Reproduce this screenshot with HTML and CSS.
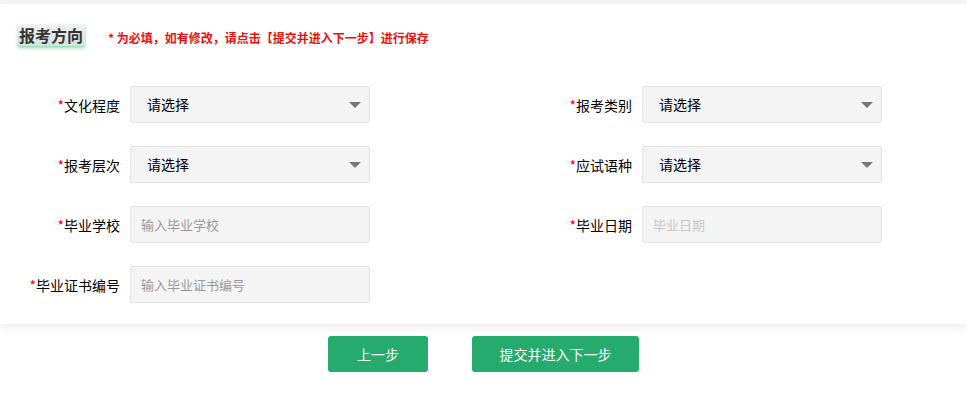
FILE: index.html
```html
<!DOCTYPE html>
<html lang="zh-CN">
<head>
    <meta charset="UTF-8">
    <title>报考方向</title>
    <link rel="stylesheet" href="styles.css">
</head>
<body>

<div class="top-strip"></div>
<div class="card">
    <div class="card-head">
        <h2 class="title">报考方向</h2>
        <span class="tip">* 为必填，如有修改，请点击【提交并进入下一步】进行保存</span>
    </div>
    <form class="form-grid">
        <div class="field">
            <label><i>*</i>文化程度</label>
            <div class="select">请选择<span class="arrow"></span></div>
        </div>
        <div class="field">
            <label><i>*</i>报考类别</label>
            <div class="select">请选择<span class="arrow"></span></div>
        </div>
        <div class="field">
            <label><i>*</i>报考层次</label>
            <div class="select">请选择<span class="arrow"></span></div>
        </div>
        <div class="field">
            <label><i>*</i>应试语种</label>
            <div class="select">请选择<span class="arrow"></span></div>
        </div>
        <div class="field">
            <label><i>*</i>毕业学校</label>
            <input type="text" placeholder="输入毕业学校">
        </div>
        <div class="field">
            <label><i>*</i>毕业日期</label>
            <input type="text" class="date" placeholder="毕业日期">
        </div>
        <div class="field">
            <label><i>*</i>毕业证书编号</label>
            <input type="text" placeholder="输入毕业证书编号">
        </div>
    </form>
</div>
<div class="actions">
    <button type="button" class="btn btn-prev">上一步</button>
    <button type="button" class="btn btn-next">提交并进入下一步</button>
</div>

</body>
</html>
```

FILE: styles.css
```css
body {
    margin: 0;
    font-family: "Noto Sans CJK SC", "Liberation Sans", sans-serif;
    font-size: 14px;
    color: #000;
    background: #fff;
}
.top-strip {
    height: 4px;
    background: #f5f5f5;
}
.card {
    background: #fff;
    height: 320px;
    box-sizing: border-box;
    padding-top: 20px;
    box-shadow: 0 4px 10px rgba(0,0,0,0.07);
}
.card-head {
    display: flex;
    align-items: center;
    padding-left: 18px;
}
.title {
    margin: 0;
    font-size: 16px;
    font-weight: bold;
    color: #333;
    line-height: 22px;
    padding: 0 2px 0 1px;
    background: linear-gradient(#eef2f0, #d6e1dc);
    box-shadow: 0 2px 3px rgba(60,190,120,0.6);
}
.tip {
    margin-left: 23px;
    margin-top: 4px;
    font-size: 12px;
    font-weight: bold;
    color: #f20d0d;
}
.form-grid {
    display: grid;
    grid-template-columns: 512px 1fr;
    row-gap: 23px;
    margin-top: 40px;
}
.field {
    display: flex;
    align-items: center;
}
.field label {
    width: 120px;
    margin-right: 10px;
    text-align: right;
    white-space: nowrap;
}
.field label i {
    font-style: normal;
    color: #e60012;
}
.select,
.field input {
    width: 240px;
    height: 37px;
    box-sizing: border-box;
    background: #f4f4f4;
    border: 1px solid #e2e2e2;
    border-radius: 3px;
}
.select {
    position: relative;
    padding-left: 16px;
    line-height: 35px;
}
.arrow {
    position: absolute;
    right: 8px;
    top: 15px;
    border-left: 6px solid transparent;
    border-right: 6px solid transparent;
    border-top: 6px solid #777;
}
.field input {
    padding: 0 10px;
    font-family: inherit;
    font-size: 13px;
    outline: none;
}
.field input::placeholder {
    color: #999;
}
.field input.date::placeholder {
    color: #c8c8c8;
}
.actions {
    display: flex;
    justify-content: center;
    gap: 44px;
    margin-top: 12px;
}
.btn {
    height: 36px;
    border: none;
    border-radius: 3px;
    background: #24ab6d;
    color: #fff;
    font-family: inherit;
    font-size: 14px;
    cursor: pointer;
}
.btn-prev {
    width: 100px;
}
.btn-next {
    width: 167px;
}
```
